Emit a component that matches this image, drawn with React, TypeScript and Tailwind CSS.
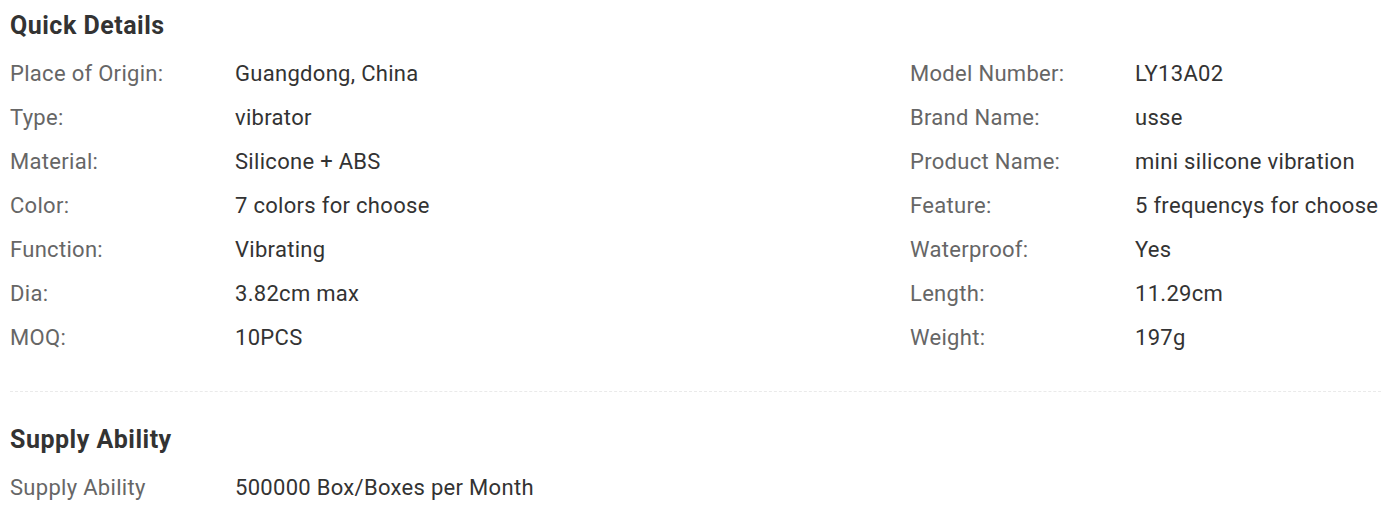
import React from 'react';

interface Detail {
  label: string;
  value: string;
}

const leftDetails: Detail[] = [
  { label: 'Place of Origin:', value: 'Guangdong, China' },
  { label: 'Type:', value: 'vibrator' },
  { label: 'Material:', value: 'Silicone + ABS' },
  { label: 'Color:', value: '7 colors for choose' },
  { label: 'Function:', value: 'Vibrating' },
  { label: 'Dia:', value: '3.82cm max' },
  { label: 'MOQ:', value: '10PCS' },
];

const rightDetails: Detail[] = [
  { label: 'Model Number:', value: 'LY13A02' },
  { label: 'Brand Name:', value: 'usse' },
  { label: 'Product Name:', value: 'mini silicone vibration' },
  { label: 'Feature:', value: '5 frequencys for choose' },
  { label: 'Waterproof:', value: 'Yes' },
  { label: 'Length:', value: '11.29cm' },
  { label: 'Weight:', value: '197g' },
];

const Row: React.FC<Detail> = ({ label, value }) => (
  <div className="flex h-[44px] items-center whitespace-nowrap text-[22px] tracking-[0.3px]">
    <span className="w-[225px] shrink-0 text-[#666]">{label}</span>
    <span className="text-[#333]">{value}</span>
  </div>
);

const App: React.FC = () => {
  return (
    <div className="h-[517px] overflow-hidden bg-white pl-[10px] font-['Roboto',sans-serif]">
      {/* Quick Details */}
      <h2 className="pt-[2px] text-[25px] font-bold leading-[48px] tracking-[0.5px] text-[#333]">Quick Details</h2>
      <div className="mt-[1px] grid grid-cols-[900px_1fr]">
        <div>
          {leftDetails.map((d) => (
            <Row key={d.label} {...d} />
          ))}
        </div>
        <div>
          {rightDetails.map((d) => (
            <Row key={d.label} {...d} />
          ))}
        </div>
      </div>

      <div className="mt-[32px] border-t border-dashed border-[#eaeaea]" />

      {/* Supply Ability */}
      <h2 className="mt-[24px] text-[25px] font-bold leading-[48px] tracking-[0.5px] text-[#333]">Supply Ability</h2>
      <div className="mt-[1px]">
        <Row label="Supply Ability" value="500000 Box/Boxes per Month" />
      </div>
    </div>
  );
};

export default App;
